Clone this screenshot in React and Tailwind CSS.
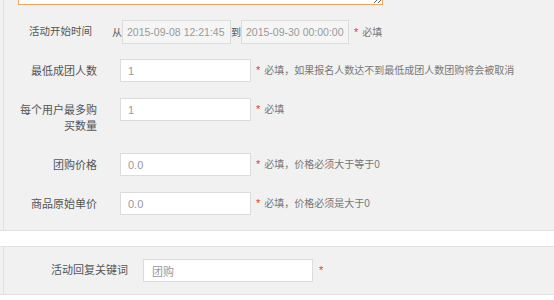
import React from "react";

const font = { fontFamily: '"Liberation Sans", "Noto Sans CJK SC", sans-serif' };

function Hint({ children }) {
  return (
    <span className="ml-[5px] flex items-center whitespace-nowrap text-[10px] text-[#777]">
      <span className="mr-[4px] text-[11px] text-[#e4393c]">*</span>
      {children}
    </span>
  );
}

function Field({ label, value, hint, className = "" }) {
  return (
    <div className={"flex items-start " + className}>
      <label className="ml-[13px] w-[80px] pt-[4px] text-right text-[11px] leading-[16px] text-[#555]">
        {label}
      </label>
      <div className="ml-[23px] flex h-[23px] items-center">
        <input
          readOnly
          value={value}
          className="h-[23px] w-[131px] border border-[#dcdcdc] bg-white px-[7px] text-[11px] text-[#999] outline-none"
        />
        <Hint>{hint}</Hint>
      </div>
    </div>
  );
}

export default function App() {
  return (
    <div className="h-[300px] w-[554px] overflow-hidden bg-white" style={font}>
      {/* ── main panel ─ */}
      <div className="border-b border-[#e2e2e2] bg-[#f1f1f1]">
        <div className="ml-[3px] border-l border-[#e0e0e0] pb-[15px]">
          <div className="ml-[14px] h-[5px] overflow-hidden">
            <textarea
              readOnly
              className="mt-[-35px] block h-[40px] w-[365px] border border-[#f5a45d] bg-white outline-none"
            />
          </div>

          {/* start / end time */}
          <div className="mt-[15px] flex h-[24px] items-center">
            <label className="ml-[25px] whitespace-nowrap text-[10.5px] text-[#555]">活动开始时间</label>
            <span className="ml-[20px] text-[10px] text-[#555]">从</span>
            <input
              readOnly
              value="2015-09-08 12:21:45"
              className="ml-[0px] h-[24px] w-[109px] border border-[#dcdcdc] bg-[#f5f5f5] px-[4px] text-[10.5px] text-[#999] outline-none"
            />
            <span className="text-[10px] text-[#555]">到</span>
            <input
              readOnly
              value="2015-09-30 00:00:00"
              className="h-[24px] w-[108px] border border-[#dcdcdc] bg-[#f5f5f5] px-[4px] text-[10.5px] text-[#999] outline-none"
            />
            <Hint>必填</Hint>
          </div>

          <Field className="mt-[15px]" label="最低成团人数" value="1" hint="必填，如果报名人数达不到最低成团人数团购将会被取消" />
          <Field className="mt-[16px] h-[39px]" label="每个用户最多购买数量" value="1" hint="必填" />
          <Field className="mt-[16px]" label="团购价格" value="0.0" hint="必填，价格必须大于等于0" />
          <Field className="mt-[16px]" label="商品原始单价" value="0.0" hint="必填，价格必须是大于0" />
        </div>
      </div>

      {/* ── keyword panel ─ */}
      <div className="mt-[15px] border-y border-[#e2e2e2] bg-[#f1f1f1]">
        <div className="ml-[3px] flex h-[47px] items-center border-l border-[#e0e0e0]">
          <label className="ml-[44px] w-[80px] whitespace-nowrap text-right text-[11px] text-[#555]">活动回复关键词</label>
          <input
            readOnly
            value="团购"
            className="ml-[15px] h-[23px] w-[170px] border border-[#dcdcdc] bg-white px-[8px] text-[11px] text-[#999] outline-none"
          />
          <span className="ml-[6px] text-[11px] text-[#e4393c]">*</span>
        </div>
      </div>
    </div>
  );
}
